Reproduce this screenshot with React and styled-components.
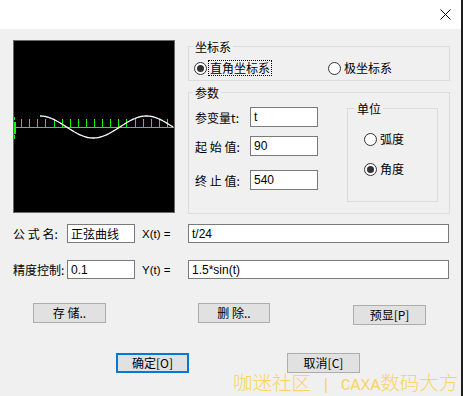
import React from 'react';
import styled, { createGlobalStyle } from 'styled-components';

const GlobalStyle = createGlobalStyle`
  html, body {
    margin: 0;
    padding: 0;
    background: #f0f0f0;
  }
  body {
    font-family: "Noto Sans CJK SC", "Liberation Sans", sans-serif;
    font-size: 12px;
    color: #000;
  }
`;

const Window = styled.div`
  position: relative;
  width: 461px;
  height: 396px;
  border-right: 2px solid #1e1e1e;
  background: #f0f0f0;
  overflow: hidden;
`;

const TitleBar = styled.div`
  height: 29px;
  box-sizing: border-box;
  background: #fff;
  display: flex;
  justify-content: flex-end;
  align-items: flex-start;
  padding: 9px 10px 0 0;
`;

const TopSection = styled.div`
  display: flex;
  align-items: flex-start;
  gap: 13px;
  padding: 11px 0 0 13px;
`;

const Canvas = styled.div`
  width: 162px;
  height: 173px;
  box-sizing: border-box;
  border: 1px solid #6a6a6a;
  background: #000;

  svg {
    display: block;
  }
`;

const RightPanel = styled.div`
  width: 262px;
  margin-top: 6px;
  display: flex;
  flex-direction: column;
`;

const Group = styled.div`
  box-sizing: border-box;
  border: 1px solid #dcdcdc;
  width: ${({ $w }) => ($w ? `${$w}px` : 'auto')};
  margin: ${({ $m }) => $m || '0'};
  padding: ${({ $pad }) => $pad || '0'};
`;

const GroupTitle = styled.div`
  width: fit-content;
  margin: -8px 0 0 ${({ $indent }) => $indent}px;
  padding: 0 2px;
  background: #f0f0f0;
  line-height: 16px;
`;

const RadioGrid = styled.div`
  display: grid;
  grid-template-columns: 134px auto;
  height: 18px;
  align-items: center;
  margin-top: 4px;
  padding-left: 5px;
`;

const Radio = styled.label`
  display: flex;
  align-items: center;
  gap: 1px;
  height: 18px;
  margin-top: ${({ $mt }) => $mt || 0}px;
  line-height: 14px;
`;

const RadioDot = styled.span`
  width: 13px;
  height: 13px;
  box-sizing: border-box;
  border: 1px solid #333;
  border-radius: 50%;
  background: #fff;
  display: flex;
  align-items: center;
  justify-content: center;

  &::after {
    content: '';
    width: 7px;
    height: 7px;
    border-radius: 50%;
    background: ${({ $on }) => ($on ? '#333' : 'transparent')};
  }
`;

const RadioText = styled.span`
  padding: 0 1px;
  border: 1px dotted ${({ $focus }) => ($focus ? '#000' : 'transparent')};
`;

const ParamRow = styled.div`
  display: flex;
  align-items: flex-start;
  padding-left: 6px;
`;

const Fields = styled.div`
  display: flex;
  flex-direction: column;
  padding-top: 6px;
`;

const FieldRow = styled.div`
  display: flex;
  align-items: center;
  height: 20px;
  margin-top: ${({ $mt }) => $mt || 0}px;
`;

const FieldLabel = styled.span`
  width: 55px;
`;

const Input = styled.div`
  box-sizing: border-box;
  width: ${({ $w }) => $w}px;
  height: ${({ $h }) => $h || 20}px;
  border: 1px solid #7a7a7a;
  background: #fff;
  padding-left: 3px;
  display: flex;
  align-items: center;
  font-family: "Liberation Sans", "Noto Sans CJK SC", sans-serif;
  font-size: 12px;
`;

const UnitRadios = styled.div`
  padding-left: 16px;
`;

const FormGrid = styled.div`
  display: grid;
  grid-template-columns: 54px 68px 53px 261px;
  grid-auto-rows: 19px;
  row-gap: 17px;
  align-items: center;
  margin-top: 10px;
  padding-left: 13px;
`;

const FormLabel = styled.span`
  white-space: nowrap;
`;

const ExprLabel = styled.span`
  padding-left: 7px;
  font-family: "Liberation Sans", sans-serif;
  font-size: 11.5px;
`;

const ButtonRow = styled.div`
  display: flex;
  align-items: flex-start;
  margin-top: ${({ $mt }) => $mt}px;
  padding-left: ${({ $pl }) => $pl}px;
`;

const Button = styled.button`
  box-sizing: border-box;
  width: ${({ $w }) => $w || 73}px;
  height: 20px;
  margin: ${({ $mt }) => $mt || 0}px 0 0 ${({ $ml }) => $ml || 0}px;
  padding: 0;
  background: #e1e1e1;
  border: ${({ $default }) => ($default ? '2px solid #0078d7' : '1px solid #adadad')};
  font-family: "Noto Sans CJK SC", "Liberation Sans", sans-serif;
  font-size: 12px;
  color: #000;
  line-height: 16px;
`;

const Watermark = styled.div`
  position: absolute;
  left: 233px;
  top: 371px;
  white-space: nowrap;
  font-family: "Noto Sans CJK SC", sans-serif;
  font-weight: 300;
  font-size: 19.5px;
  line-height: 22px;
  color: #f8d466;

  span {
    font-family: "Liberation Mono", monospace;
    font-size: 16.5px;
  }
`;

function CloseIcon() {
  return (
    <svg width="11" height="11" viewBox="0 0 11 11">
      <path d="M0.5 0.5 L10.5 10.5 M10.5 0.5 L0.5 10.5" stroke="#000" strokeWidth="1" fill="none" />
    </svg>
  );
}

const TICKS = [7, 15, 23, 31, 40, 48, 56, 64, 72, 80, 88, 96, 104, 112, 121, 129, 137, 145, 153];

function Plot() {
  const pts = [];
  for (let t = 90; t <= 540; t += 3) {
    const x = 26 + ((t - 90) * 133) / 450;
    const y = 86 - 11 * Math.sin((t * Math.PI) / 180);
    pts.push(`${x.toFixed(1)},${y.toFixed(1)}`);
  }
  return (
    <svg width="160" height="171" viewBox="0 0 160 171">
      <line x1="0" y1="86.5" x2="160" y2="86.5" stroke="#00ff00" strokeWidth="1" />
      {TICKS.map((x) => (
        <line key={x} x1={x + 0.5} y1="78" x2={x + 0.5} y2="86" stroke="#00ff00" strokeWidth="1" />
      ))}
      <line x1="0.5" y1="76" x2="0.5" y2="79" stroke="#00ff00" strokeWidth="1" />
      <rect x="0" y="81" width="2" height="12" fill="#00ff00" />
      <line x1="0.5" y1="94" x2="0.5" y2="98" stroke="#00ff00" strokeWidth="1" />
      <polyline points={pts.join(' ')} stroke="#fff" strokeWidth="1.3" fill="none" />
    </svg>
  );
}

export default function App() {
  return (
    <>
      <GlobalStyle />
      <Window>
        <TitleBar>
          <CloseIcon />
        </TitleBar>

        <TopSection>
          <Canvas>
            <Plot />
          </Canvas>

          <RightPanel>
            <Group $pad="0 0 3px 0">
              <GroupTitle $indent={4}>坐标系</GroupTitle>
              <RadioGrid>
                <Radio>
                  <RadioDot $on />
                  <RadioText $focus>直角坐标系</RadioText>
                </Radio>
                <Radio>
                  <RadioDot />
                  <RadioText>极坐标系</RadioText>
                </Radio>
              </RadioGrid>
            </Group>

            <Group $m="11px 0 0 0" $pad="0 0 11px 0">
              <GroupTitle $indent={4}>参数</GroupTitle>
              <ParamRow>
                <Fields>
                  <FieldRow>
                    <FieldLabel>参变量t:</FieldLabel>
                    <Input $w={68}>t</Input>
                  </FieldRow>
                  <FieldRow $mt={9}>
                    <FieldLabel>起 始 值:</FieldLabel>
                    <Input $w={68}>90</Input>
                  </FieldRow>
                  <FieldRow $mt={14}>
                    <FieldLabel>终 止 值:</FieldLabel>
                    <Input $w={68}>540</Input>
                  </FieldRow>
                </Fields>

                <Group $w={91} $m="7px 0 0 29px" $pad="0 0 23px 0">
                  <GroupTitle $indent={7}>单位</GroupTitle>
                  <UnitRadios>
                    <Radio $mt={13}>
                      <RadioDot />
                      <RadioText>弧度</RadioText>
                    </Radio>
                    <Radio $mt={12}>
                      <RadioDot $on />
                      <RadioText>角度</RadioText>
                    </Radio>
                  </UnitRadios>
                </Group>
              </ParamRow>
            </Group>
          </RightPanel>
        </TopSection>

        <FormGrid>
          <FormLabel>公 式 名:</FormLabel>
          <Input $w={68} $h={19}>正弦曲线</Input>
          <ExprLabel>X(t) =</ExprLabel>
          <Input $w={261} $h={19}>t/24</Input>

          <FormLabel>精度控制:</FormLabel>
          <Input $w={68} $h={19}>0.1</Input>
          <ExprLabel>Y(t) =</ExprLabel>
          <Input $w={261} $h={19}>1.5*sin(t)</Input>
        </FormGrid>

        <ButtonRow $mt={24} $pl={33}>
          <Button>存 储..</Button>
          <Button $w={72} $ml={92}>删 除..</Button>
          <Button $ml={83} $mt={2}>预显[P]</Button>
        </ButtonRow>

        <ButtonRow $mt={28} $pl={116}>
          <Button $default>确定[O]</Button>
          <Button $ml={98}>取消[C]</Button>
        </ButtonRow>

        <Watermark>
          咖迷社区<span> | CAXA</span>数码大方
        </Watermark>
      </Window>
    </>
  );
}
